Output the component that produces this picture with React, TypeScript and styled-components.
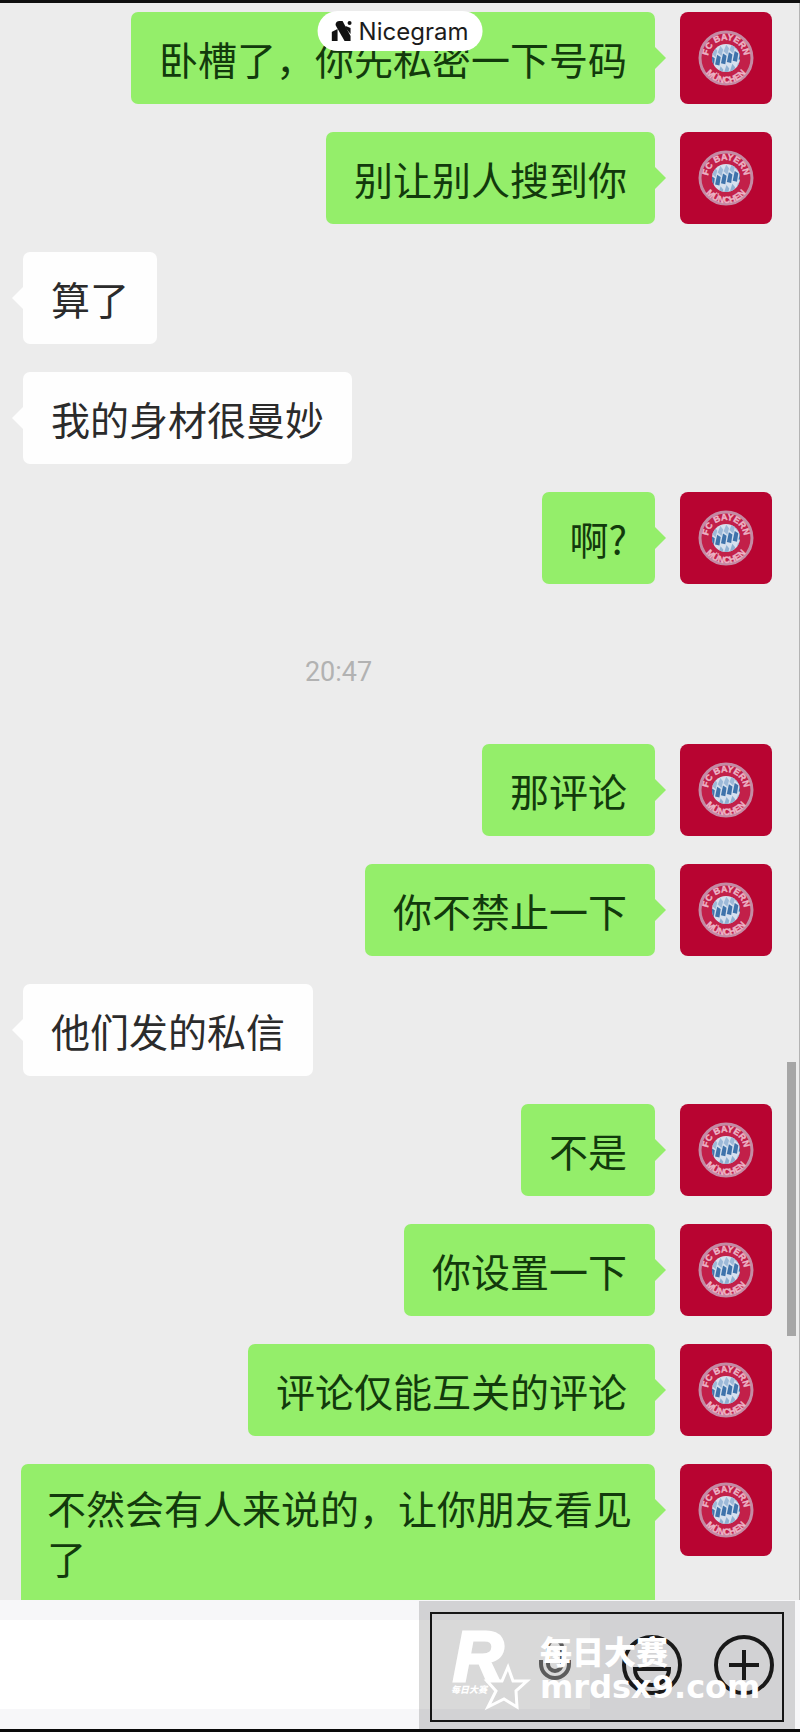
import React from 'react';
import styled, { createGlobalStyle } from 'styled-components';

const GlobalStyle = createGlobalStyle`
  * {
    box-sizing: border-box;
  }
  body {
    margin: 0;
    background: #ececec;
    font-family: 'Noto Sans CJK SC', sans-serif;
  }
`;

const Screen = styled.div`
  position: relative;
  display: flex;
  flex-direction: column;
  min-height: 100vh;
  border-top: 3px solid #101010;
  border-bottom: 3px solid #0a0a0a;
  background: #ececec;
`;

const Brand = styled.div`
  position: absolute;
  top: 8px;
  left: 50%;
  transform: translateX(-50%);
  display: flex;
  align-items: center;
  gap: 6px;
  height: 40px;
  padding: 0 14px;
  border-radius: 20px;
  background: white;
  color: #1c1c1c;
  font-family: Inter, sans-serif;
  font-size: 24px;
  z-index: 2;
`;

const Messages = styled.main`
  display: flex;
  flex-direction: column;
  gap: 28px;
  padding: 9px 27px 0 23px;
  border-right: 1px solid #b4b4b4;
`;

const Row = styled.div<{ $mine: boolean }>`
  display: flex;
  align-items: flex-start;
  justify-content: ${(p) => (p.$mine ? 'flex-end' : 'flex-start')};
  gap: 25px;
  margin-left: ${(p) => (p.$mine ? '-2px' : '0')};
`;

const Bubble = styled.div<{ $mine: boolean; $long: boolean }>`
  position: relative;
  padding: ${(p) => (p.$long ? '18px 22px 18px 26px' : '21px 28px')};
  border-radius: ${(p) => (p.$long ? '7px 7px 0 0' : '7px')};
  background: ${(p) => (p.$mine ? '#94ee6a' : '#fefefe')};
  color: ${(p) => (p.$mine ? '#123a0c' : '#2b2b2b')};
  font-size: 39px;
  line-height: 50px;

  &::after {
    content: '';
    position: absolute;
    top: 35px;
    ${(p) => (p.$mine ? 'left: 100%;' : 'right: 100%;')}
    border: 11px solid transparent;
    border-${(p) => (p.$mine ? 'left' : 'right')}-color: ${(p) => (p.$mine ? '#94ee6a' : '#fefefe')};
    border-${(p) => (p.$mine ? 'right' : 'left')}-width: 0;
  }
`;

const Avatar = styled.svg`
  flex: none;
  width: 92px;
  height: 92px;
  border-radius: 8px;
  background: #b80431;
`;

const Time = styled.time`
  align-self: center;
  margin: 35px 118px 19px 0;
  color: #b2b2b2;
  font-family: Roboto, sans-serif;
  font-size: 27px;
  line-height: 50px;
`;

const ScrollThumb = styled.div`
  position: absolute;
  top: 1059px;
  right: 4px;
  width: 9px;
  height: 274px;
  background: #a6a6a6;
`;

const Composer = styled.footer`
  position: relative;
  flex: 1;
  display: flex;
  align-items: center;
  gap: 32px;
  min-height: 129px;
  padding-right: 26px;
  background: #f7f7f9;
`;

const Field = styled.div`
  flex: 1;
  display: flex;
  align-items: center;
  justify-content: flex-end;
  height: 89px;
  padding-right: 18px;
  background: white;
`;

const TextInput = styled.input`
  flex: 1;
  min-width: 0;
  height: 100%;
  border: none;
  outline: none;
  background: transparent;
  font-size: 39px;
`;

const IconButton = styled.button`
  display: flex;
  padding: 0;
  border: none;
  background: none;
  color: #1e1e1e;
`;

const Watermark = styled.div`
  position: absolute;
  top: 1px;
  right: 5px;
  bottom: 0;
  width: 376px;
  padding: 11px;
  background: rgba(0, 0, 0, 0.15);
  pointer-events: none;
`;

const Frame = styled.div`
  display: flex;
  align-items: center;
  gap: 10px;
  height: 110px;
  padding-left: 18px;
  border: 2px solid #151515;
  color: white;
`;

const StarLogo = styled.svg`
  width: 80px;
  height: 84px;
  overflow: visible;
`;

const Site = styled.div`
  padding-top: 4px;
`;

const SiteName = styled.div`
  font-size: 32px;
  font-weight: 900;
  line-height: 36px;
`;

const SiteUrl = styled.div`
  font-family: 'DejaVu Sans', sans-serif;
  font-size: 32px;
  font-weight: 700;
  line-height: 38px;
`;

interface IMessage {
  text: string;
  mine: boolean;
}

const earlier: IMessage[] = [
  { text: '卧槽了，你先私密一下号码', mine: true },
  { text: '别让别人搜到你', mine: true },
  { text: '算了', mine: false },
  { text: '我的身材很曼妙', mine: false },
  { text: '啊?', mine: true },
];

const later: IMessage[] = [
  { text: '那评论', mine: true },
  { text: '你不禁止一下', mine: true },
  { text: '他们发的私信', mine: false },
  { text: '不是', mine: true },
  { text: '你设置一下', mine: true },
  { text: '评论仅能互关的评论', mine: true },
  { text: '不然会有人来说的，让你朋友看见了', mine: true },
];

const ClubAvatar: React.FC<{ id: string }> = ({ id }) => (
  <Avatar viewBox='0 0 92 92' role='img' aria-label='FC Bayern München'>
    <defs>
      <path id={`${id}-top`} d='M28 46 A18 18 0 0 1 64 46' />
      <path id={`${id}-bottom`} d='M21 46 A25 25 0 0 0 71 46' />
      <clipPath id={`${id}-clip`}>
        <circle cx='46' cy='46' r='14' />
      </clipPath>
    </defs>
    <circle cx='46' cy='46' r='26' fill='#c22049' stroke='#c48ba4' strokeWidth='3' />
    <circle cx='46' cy='46' r='14' fill='#d6e0ee' />
    <g clipPath={`url(#${id}-clip)`}>
      <g transform='rotate(-12 46 46)'>
        {[0, 1, 2, 3, 4, 5].map((i) => (
          <React.Fragment key={i}>
            <path d={`M${27 + i * 6} 39 l4 -6 l2 4 l-3 6z`} fill='#9db9d8' />
            <path d={`M${28 + i * 6} 50 l4 -9 l3 3 l-3 8z`} fill='#3f73ab' />
            <path d={`M${29 + i * 6} 60 l4 -7 l2 4 l-3 6z`} fill='#8fb0d2' />
          </React.Fragment>
        ))}
      </g>
    </g>
    <g
      fill='#ecb4c6'
      stroke='#ecb4c6'
      strokeWidth='0.4'
      fontFamily='Liberation Sans'
      fontWeight='700'
      fontSize='9'
      textAnchor='middle'
    >
      <text>
        <textPath href={`#${id}-top`} startOffset='50%'>
          FC BAYERN
        </textPath>
      </text>
      <text>
        <textPath href={`#${id}-bottom`} startOffset='50%'>
          MÜNCHEN
        </textPath>
      </text>
    </g>
  </Avatar>
);

const Message: React.FC<{ message: IMessage; id: string }> = ({ message, id }) => (
  <Row $mine={message.mine}>
    <Bubble $mine={message.mine} $long={message.text.length > 14}>
      {message.text}
    </Bubble>
    {message.mine && <ClubAvatar id={id} />}
  </Row>
);

const App: React.FC = () => {
  return (
    <>
      <GlobalStyle />
      <Screen>
        <Brand>
          <svg width='21' height='21' viewBox='0 0 21 21' fill='#111'>
            <path d='M0 11 L6 8 V20 H0z' />
            <path d='M4 4 Q4 0 8 0 H11 L19 15 V20 H13 L5 6z' />
            <path d='M14 5 L19 7 V13 L14 7z' />
            <circle cx='18' cy='2' r='2' />
          </svg>
          Nicegram
        </Brand>
        <Messages>
          {earlier.map((message, i) => (
            <Message key={message.text} message={message} id={`a${i}`} />
          ))}
          <Time>20:47</Time>
          {later.map((message, i) => (
            <Message key={message.text} message={message} id={`b${i}`} />
          ))}
        </Messages>
        <ScrollThumb />
        <Composer>
          <Field>
            <TextInput aria-label='消息' />
            <IconButton aria-label='语音'>
              <svg width='34' height='50' viewBox='0 0 34 50' fill='none' stroke='#6c6c6c' strokeWidth='4'>
                <rect x='10' y='0' width='14' height='31' rx='7' />
                <path d='M3 20 V24 A14 14 0 0 0 31 24 V20' />
              </svg>
            </IconButton>
          </Field>
          <IconButton aria-label='表情'>
            <svg width='60' height='60' viewBox='0 0 60 60' fill='none' stroke='currentColor' strokeWidth='4'>
              <circle cx='30' cy='30' r='28' />
              <path d='M13 34 H47 A17 16 0 0 1 13 34z' />
              <path d='M19 21 h5 M36 21 h5' />
            </svg>
          </IconButton>
          <IconButton aria-label='更多'>
            <svg width='60' height='60' viewBox='0 0 60 60' fill='none' stroke='currentColor' strokeWidth='4'>
              <circle cx='30' cy='30' r='28' />
              <path d='M15 30 H45 M30 15 V45' />
            </svg>
          </IconButton>
          <Watermark>
            <Frame>
              <StarLogo viewBox='0 0 80 84'>
                <text x='3' y='56' fill='#fff' stroke='#fff' strokeWidth='3' fontFamily='Liberation Sans' fontWeight='700' fontStyle='italic' fontSize='70'>
                  R
                </text>
                <text x='1' y='68' fill='#fff' fontFamily='Noto Sans CJK SC' fontWeight='900' fontStyle='italic' fontSize='9'>
                  每日大赛
                </text>
                <path
                  d='M58 42 L63 56 L77 56 L66 66 L67 82 L54 74 L38 82 L46 66 L37 56 L52 56z'
                  fill='#d7d7d7'
                  stroke='#fff'
                  strokeWidth='3'
                />
              </StarLogo>
              <Site>
                <SiteName>每日大赛</SiteName>
                <SiteUrl>mrdsx9.com</SiteUrl>
              </Site>
            </Frame>
          </Watermark>
        </Composer>
      </Screen>
    </>
  );
};

export default App;
